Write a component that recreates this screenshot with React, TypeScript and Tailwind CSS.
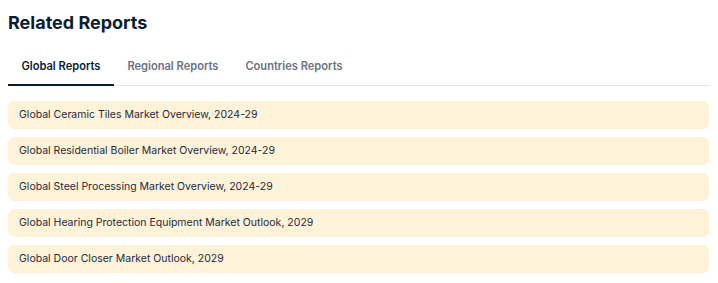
const reports = [
  "Global Ceramic Tiles Market Overview, 2024-29",
  "Global Residential Boiler Market Overview, 2024-29",
  "Global Steel Processing Market Overview, 2024-29",
  "Global Hearing Protection Equipment Market Outlook, 2029",
  "Global Door Closer Market Outlook, 2029",
];

const tabs = ["Global Reports", "Regional Reports", "Countries Reports"];

export default function App() {
  return (
    <div className="bg-white w-[718px] h-[283px] px-2 pt-[10px] font-['Inter',sans-serif]">
      <h2 className="text-[18px] leading-[26px] font-bold text-[#0b1d33]">
        Related Reports
      </h2>
      <div className="mt-[23px] flex border-b border-[#e5e7eb]">
        {tabs.map((tab, i) => (
          <div
            key={tab}
            className={
              i === 0
                ? "px-[13.5px] pb-[10px] text-[11.1px] leading-[15px] font-semibold text-[#0b1d33] border-b-2 border-[#0b1d33] -mb-px"
                : "px-[13.5px] pb-[10px] text-[11.1px] leading-[15px] font-semibold text-[#6b7280]"
            }
          >
            {tab}
          </div>
        ))}
      </div>
      <div className="mt-[15px] flex flex-col gap-2 pr-px">
        {reports.map((r) => (
          <div
            key={r}
            className="h-[28px] flex items-center px-[11px] rounded-md bg-[#fef3d8] text-[10.5px] text-[#1e293b]"
          >
            {r}
          </div>
        ))}
      </div>
    </div>
  );
}
